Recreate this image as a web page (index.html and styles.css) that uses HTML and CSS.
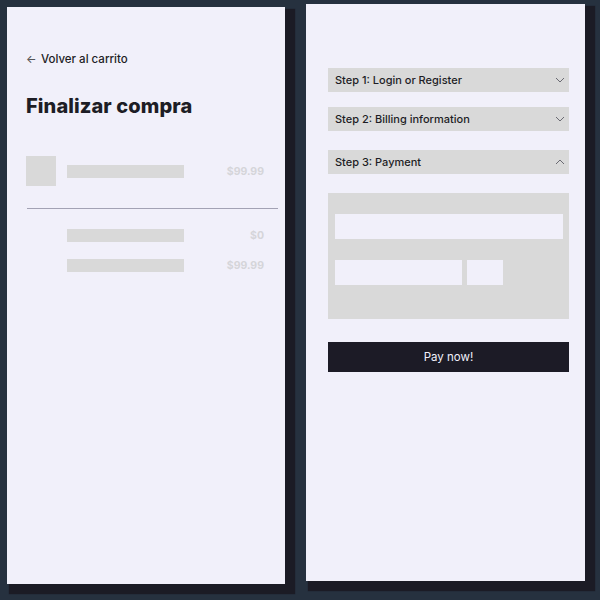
FILE: index.html
```html
<!DOCTYPE html>
<html lang="es">
<head>
<meta charset="utf-8">
<title>Finalizar compra</title>
<link rel="stylesheet" href="styles.css">
</head>
<body>
<main class="screens">
  <section class="card card-cart">
    <a class="back-link" href="#"><span class="back-arrow">&larr;</span>Volver al carrito</a>
    <h1 class="title">Finalizar compra</h1>
    <div class="line-item">
      <div class="thumb"></div>
      <div class="bar"></div>
      <span class="price">$99.99</span>
    </div>
    <hr class="divider">
    <div class="summary">
      <div class="summary-row">
        <div class="bar"></div>
        <span class="price">$0</span>
      </div>
      <div class="summary-row">
        <div class="bar"></div>
        <span class="price">$99.99</span>
      </div>
    </div>
  </section>

  <section class="card card-steps">
    <div class="step">
      <span>Step 1: Login or Register</span>
      <svg class="chevron" viewBox="0 0 10 6" width="10" height="6"><path d="M1 1l4 4 4-4"/></svg>
    </div>
    <div class="step">
      <span>Step 2: Billing information</span>
      <svg class="chevron" viewBox="0 0 10 6" width="10" height="6"><path d="M1 1l4 4 4-4"/></svg>
    </div>
    <div class="step step-open">
      <span>Step 3: Payment</span>
      <svg class="chevron" viewBox="0 0 10 6" width="10" height="6"><path d="M1 5l4-4 4 4"/></svg>
    </div>
    <div class="payment">
      <div class="field field-full"></div>
      <div class="field-row">
        <div class="field field-exp"></div>
        <div class="field field-cvc"></div>
      </div>
    </div>
    <button class="pay" type="button">Pay now!</button>
  </section>
</main>
</body>
</html>
```

FILE: styles.css
```css
* {
  box-sizing: border-box;
}

html,
body {
  margin: 0;
  height: 100%;
}

body {
  background: #26313f;
  font-family: "Inter", "Noto Sans", sans-serif;
  color: #1d1d25;
}

.screens {
  display: flex;
  align-items: flex-start;
  gap: 21px;
  padding: 4px 0 0 7px;
}

.card {
  background: #f1f0fa;
  height: 577px;
  box-shadow: 6px 6px 1px 4px #1b1b25;
}

/* left screen: cart summary */
.card-cart {
  width: 278px;
  margin-top: 3px;
  padding: 44px 7px 0 19px;
}

.back-link {
  display: flex;
  align-items: center;
  height: 16px;
  font-size: 11.5px;
  font-weight: 500;
  color: #1d1d25;
  text-decoration: none;
}

.back-arrow {
  width: 15px;
  font-size: 11px;
  color: #555;
}

.title {
  margin: 25px 0 0;
  font-size: 20px;
  line-height: 28px;
  font-weight: 800;
  letter-spacing: 0.1px;
}

.line-item {
  display: flex;
  align-items: center;
  margin-top: 36px;
  width: 238px;
}

.thumb {
  width: 30px;
  height: 30px;
  background: #d9d9d9;
  margin-right: 11px;
}

.bar {
  width: 117px;
  height: 13px;
  background: #d9d9d9;
}

.price {
  margin-left: auto;
  font-size: 10.5px;
  font-weight: 700;
  color: #d5d5d9;
}

.divider {
  margin: 22px 0 0 1px;
  border: 0;
  border-top: 1px solid #a3a2b4;
  width: 251px;
}

.summary {
  display: flex;
  flex-direction: column;
  gap: 17px;
  margin-top: 20px;
  width: 238px;
  padding-left: 41px;
}

.summary-row {
  display: flex;
  align-items: center;
}

/* right screen: checkout steps */
.card-steps {
  width: 279px;
  padding: 64px 16px 0 22px;
}

.step {
  display: flex;
  align-items: center;
  justify-content: space-between;
  height: 24px;
  padding: 0 4px 0 7px;
  background: #d9d9d9;
  font-size: 11px;
  font-weight: 500;
  line-height: 22px;
}

.step + .step {
  margin-top: 15px;
}

.step-open {
  margin-top: 19px !important;
}

.chevron {
  fill: none;
  stroke: #6a6a72;
  stroke-width: 1;
}

.payment {
  margin-top: 19px;
  height: 126px;
  background: #d9d9d9;
  padding: 21px 6px 0 7px;
}

.field {
  height: 25px;
  background: #f1f0fa;
}

.field-row {
  display: flex;
  gap: 5px;
  margin-top: 21px;
}

.field-exp {
  width: 127px;
}

.field-cvc {
  width: 36px;
}

.pay {
  display: block;
  width: 100%;
  height: 30px;
  margin-top: 23px;
  border: 0;
  background: #1c1b26;
  color: #f1f0fa;
  font-family: inherit;
  font-size: 11.5px;
  font-weight: 400;
}
```
